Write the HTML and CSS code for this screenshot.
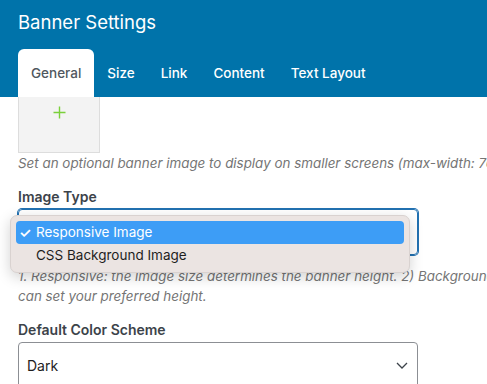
FILE: index.html
```html
<!DOCTYPE html>
<html lang="en">
<head>
  <meta charset="UTF-8">
  <title>Banner Settings</title>
  <meta name="viewport" content="width=device-width, initial-scale=1">
  <link rel="stylesheet" href="styles.css">
</head>
<body>

  <header class="panel-head">
    <h1 class="panel-title">Banner Settings</h1>
    <nav class="tabs">
      <a class="tab active">General</a>
      <a class="tab">Size</a>
      <a class="tab">Link</a>
      <a class="tab">Content</a>
      <a class="tab">Text Layout</a>
    </nav>
  </header>

  <main class="panel-body">
    <div class="field">
      <div class="image-pick">
        <svg width="13" height="13" viewBox="0 0 13 13">
          <path d="M6.5 0.5v12M0.5 6.5h12" stroke="#7ad03a" stroke-width="1.4" fill="none"/>
        </svg>
      </div>
      <p class="help nowrap">Set an optional banner image to display on smaller screens (max-width: 768px).</p>
    </div>

    <div class="field">
      <label class="label">Image Type</label>
      <div class="select-wrap">
        <div class="select focused"></div>
        <ul class="menu">
          <li class="menu-item selected"><span class="check">✓</span>Responsive Image</li>
          <li class="menu-item"><span class="check"></span>CSS Background Image</li>
        </ul>
      </div>
      <p class="help">1. Responsive: the image size determines the banner height. 2) Background: you can set your preferred height.</p>
    </div>

    <div class="field">
      <label class="label">Default Color Scheme</label>
      <div class="select">
        <span>Dark</span>
        <svg class="chevron" width="12" height="7" viewBox="0 0 12 7">
          <path d="M1 1l5 5 5-5" stroke="#3c434a" stroke-width="1.3" fill="none"/>
        </svg>
      </div>
    </div>
  </main>

</body>
</html>
```

FILE: styles.css
```css
body {
  margin: 0;
  font-family: Inter, "Liberation Sans", sans-serif;
  background-color: #ffffff;
  color: #1e1e1e;
  overflow: hidden;
}

.panel-head {
  background-color: #0073aa;
  padding: 10px 18px 0;
}

.panel-title {
  margin: 0;
  font-size: 18.5px;
  line-height: 24px;
  font-weight: 400;
  color: #ffffff;
}

.tabs {
  display: flex;
  margin-top: 15px;
}

.tab {
  padding: 0 13px;
  height: 48px;
  line-height: 48px;
  font-size: 13.5px;
  font-weight: 500;
  color: #ffffff;
}

.tab.active {
  background: #ffffff;
  color: #50575e;
  border-radius: 6px 6px 0 0;
}

.panel-body {
  width: 520px;
  padding: 0 18px;
}

.image-pick {
  width: 82px;
  height: 56px;
  box-sizing: border-box;
  background: #f3f3f3;
  border: 1px solid #dddddd;
  border-top: none;
  display: flex;
  justify-content: center;
  padding-top: 9px;
}

.help {
  margin: 0;
  font-size: 13.4px;
  line-height: 20px;
  font-style: italic;
  color: #757575;
}

.nowrap {
  white-space: nowrap;
}

.field {
  margin-bottom: 14px;
}

.label {
  display: block;
  font-size: 14px;
  font-weight: 600;
  line-height: 20px;
  color: #3c434a;
  margin: 4px 0 2px;
}

.select-wrap {
  position: relative;
  width: 400px;
  margin-bottom: 11px;
}

.select {
  width: 400px;
  height: 46px;
  box-sizing: border-box;
  border: 1px solid #8c8f94;
  border-radius: 4px;
  padding: 0 8px;
  display: flex;
  align-items: center;
  justify-content: space-between;
  font-size: 14px;
}

.select.focused {
  border-color: #2271b1;
  box-shadow: 0 0 0 1px #2271b1;
}

.chevron {
  margin-right: 1px;
}

.menu {
  position: absolute;
  left: -8px;
  top: 6px;
  width: 400px;
  margin: 0;
  padding: 5px;
  box-sizing: border-box;
  list-style: none;
  background: #ebe4e2;
  border: 1px solid #d9d2d0;
  border-radius: 7px;
  box-shadow: 0 4px 14px rgba(0,0,0,0.18);
}

.menu-item {
  height: 23px;
  line-height: 23px;
  font-size: 13.5px;
  color: #1e1e1e;
  border-radius: 4px;
  display: flex;
}

.menu-item.selected {
  background: #3d9df6;
  color: #ffffff;
}

.check {
  width: 17px;
  padding-left: 3px;
  font-size: 14px;
  font-weight: 600;
}
```
